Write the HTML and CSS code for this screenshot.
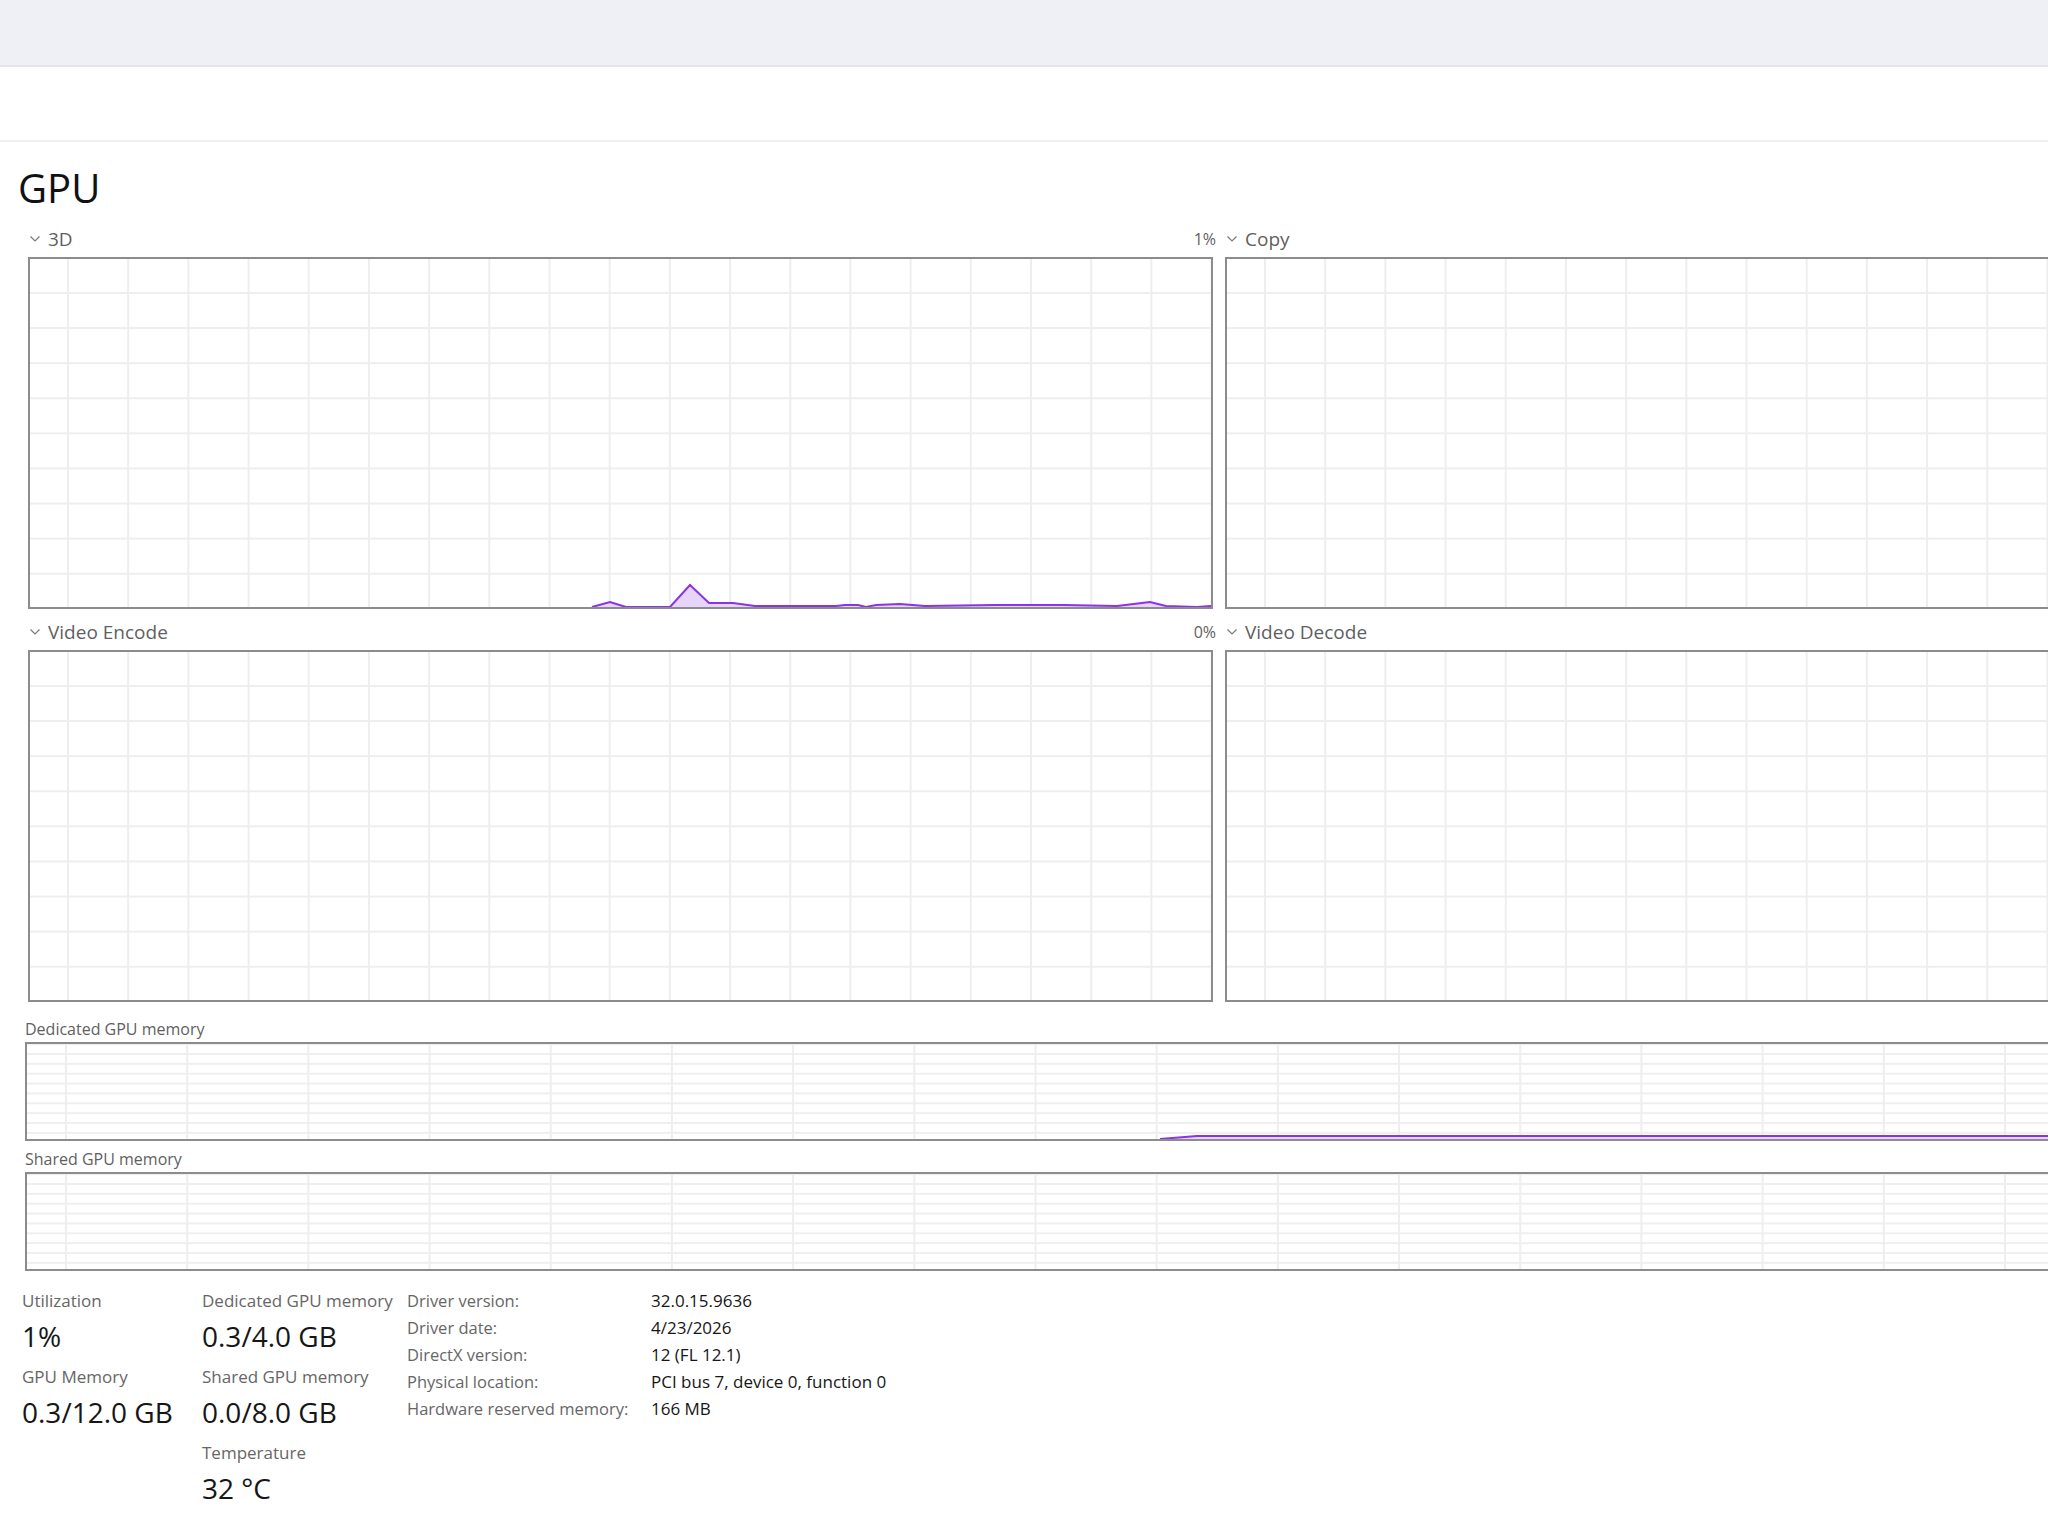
FILE: index.html
```html
<!DOCTYPE html>
<html lang="en">
<head>
  <meta charset="UTF-8">
  <meta name="viewport" content="width=device-width, initial-scale=1">
  <title>GPU</title>
  <link rel="stylesheet" href="styles.css">
</head>
<body>
  <div class="topbar"></div>
  <div class="subbar"></div>

  <div class="page">
    <h1 class="title">GPU</h1>

    <div class="engines">
      <div class="engine">
        <div class="engine-head">
          <span class="engine-name">
            <svg class="chev" width="10" height="6" viewBox="0 0 10 6"><polyline points="0.5,0.5 5,5 9.5,0.5" /></svg>
            3D
          </span>
          <span class="engine-pct">1%</span>
        </div>
        <div class="chart big">
          <svg class="plot" viewBox="0 0 1181 348" preserveAspectRatio="none">
            <polygon class="fill" points="562,348 580,343 596,348 640,348 660,326 679,344 703,344 725,347 806,347 815,346 828,346 836,348 846,346 870,345 895,347 966,346 1033,346 1087,347 1120,343 1136,347 1167,348 1181,347 1181,348" />
            <polyline class="line" points="562,348 580,343 596,348 640,348 660,326 679,344 703,344 725,347 806,347 815,346 828,346 836,348 846,346 870,345 895,347 966,346 1033,346 1087,347 1120,343 1136,347 1167,348 1181,347" />
          </svg>
        </div>
      </div>

      <div class="engine">
        <div class="engine-head">
          <span class="engine-name">
            <svg class="chev" width="10" height="6" viewBox="0 0 10 6"><polyline points="0.5,0.5 5,5 9.5,0.5" /></svg>
            Copy
          </span>
        </div>
        <div class="chart big"></div>
      </div>

      <div class="engine">
        <div class="engine-head">
          <span class="engine-name">
            <svg class="chev" width="10" height="6" viewBox="0 0 10 6"><polyline points="0.5,0.5 5,5 9.5,0.5" /></svg>
            Video Encode
          </span>
          <span class="engine-pct">0%</span>
        </div>
        <div class="chart big"></div>
      </div>

      <div class="engine">
        <div class="engine-head">
          <span class="engine-name">
            <svg class="chev" width="10" height="6" viewBox="0 0 10 6"><polyline points="0.5,0.5 5,5 9.5,0.5" /></svg>
            Video Decode
          </span>
        </div>
        <div class="chart big"></div>
      </div>
    </div>

    <div class="mem-label first">Dedicated GPU memory</div>
    <div class="chart mem">
      <svg class="plot" viewBox="0 0 2076 95" preserveAspectRatio="none">
        <polygon class="fill" points="1133,95 1170,92 2076,92 2076,95" />
        <polyline class="line" points="1133,95 1170,92 2076,92" />
      </svg>
    </div>

    <div class="mem-label">Shared GPU memory</div>
    <div class="chart mem"></div>

    <div class="details">
      <div class="stat-col first-col">
        <div class="stat">
          <div class="stat-label">Utilization</div>
          <div class="stat-value">1%</div>
        </div>
        <div class="stat">
          <div class="stat-label">GPU Memory</div>
          <div class="stat-value">0.3/12.0 GB</div>
        </div>
      </div>

      <div class="stat-col second-col">
        <div class="stat">
          <div class="stat-label">Dedicated GPU memory</div>
          <div class="stat-value">0.3/4.0 GB</div>
        </div>
        <div class="stat">
          <div class="stat-label">Shared GPU memory</div>
          <div class="stat-value">0.0/8.0 GB</div>
        </div>
        <div class="stat">
          <div class="stat-label">Temperature</div>
          <div class="stat-value">32 °C</div>
        </div>
      </div>

      <table class="info">
        <tr><td class="k">Driver version:</td><td class="v">32.0.15.9636</td></tr>
        <tr><td class="k">Driver date:</td><td class="v">4/23/2026</td></tr>
        <tr><td class="k">DirectX version:</td><td class="v">12 (FL 12.1)</td></tr>
        <tr><td class="k">Physical location:</td><td class="v">PCI bus 7, device 0, function 0</td></tr>
        <tr><td class="k">Hardware reserved memory:</td><td class="v">166 MB</td></tr>
      </table>
    </div>
  </div>
</body>
</html>
```

FILE: styles.css
```css
html, body {
  margin: 0;
  padding: 0;
  background: #fff;
  overflow: hidden;
}
body {
  font-family: "Open Sans", "Noto Sans", sans-serif;
  color: #1b1b1b;
  width: 2048px;
  height: 1536px;
}
.topbar {
  height: 65px;
  background: #eff0f5;
  border-bottom: 2px solid #e4e5eb;
}
.subbar {
  height: 73px;
  background: #fff;
  border-bottom: 2px solid #eeeff3;
}
.page {
  padding-left: 25px;
  width: 2400px;
}
.title {
  margin: 19px 0 9px -7px;
  font-size: 40px;
  font-weight: 400;
  line-height: 54px;
  color: #111;
}

/* engine charts */
.engines {
  margin-left: 3px;
  display: grid;
  grid-template-columns: 1185px 1185px;
  column-gap: 12px;
  row-gap: 8px;
}
.engine-head {
  height: 30px;
  margin-bottom: 3px;
  display: flex;
  align-items: center;
  justify-content: space-between;
}
.engine-name {
  display: flex;
  align-items: center;
  gap: 8px;
  padding-left: 2px;
  font-size: 19px;
  color: #5f5f5f;
}
.engine-pct {
  font-size: 16px;
  color: #5f5f5f;
  margin-right: -3px;
}
.chev polyline {
  fill: none;
  stroke: #7a7a7a;
  stroke-width: 1.2;
}

.chart {
  box-sizing: border-box;
  border: 2px solid #8c8c8c;
  background-color: #fff;
}
.chart.big {
  height: 352px;
  background-image:
    linear-gradient(to right, #eeeeee 0, #eeeeee 2px, transparent 2px),
    linear-gradient(to bottom, #eeeeee 0, #eeeeee 2px, transparent 2px);
  background-size: 60.2px 35.1px, 60.2px 35.1px;
  background-position: 37px 33px, 37px 33px;
}
.chart.mem {
  height: 99px;
  width: 2080px;
  background-image:
    linear-gradient(to right, #eeeeee 0, #eeeeee 2px, transparent 2px),
    linear-gradient(to bottom, #efefef 0, #efefef 2px, transparent 2px);
  background-size: 121.2px 9.87px, 121.2px 9.87px;
  background-position: 38px 9px, 38px 9px;
}
.plot {
  display: block;
  width: 100%;
  height: 100%;
}
.plot .fill {
  fill: #e7d4fa;
}
.plot .line {
  fill: none;
  stroke: #8b34e3;
  stroke-width: 2;
}

.mem-label {
  font-size: 16px;
  line-height: 20px;
  color: #5f5f5f;
  margin-top: 8px;
  margin-bottom: 3px;
}
.mem-label.first {
  margin-top: 17px;
}

/* details below the charts */
.details {
  display: flex;
  align-items: flex-start;
  margin-top: 19px;
  margin-left: -3px;
}
.stat-col.first-col {
  width: 180px;
}
.stat-col.second-col {
  width: 205px;
}
.stat {
  margin-bottom: 12px;
}
.stat-label {
  font-size: 17px;
  line-height: 22px;
  color: #666;
  margin-bottom: 6px;
  white-space: nowrap;
}
.stat-value {
  font-size: 28px;
  line-height: 36px;
  color: #161616;
  white-space: nowrap;
}
.info {
  border-collapse: collapse;
  margin-top: -3px;
}
.info td {
  padding: 0;
  height: 27px;
  line-height: 27px;
  white-space: nowrap;
}
.info .k {
  width: 244px;
  font-size: 16.5px;
  color: #666;
}
.info .v {
  font-size: 17px;
  color: #161616;
}
```
